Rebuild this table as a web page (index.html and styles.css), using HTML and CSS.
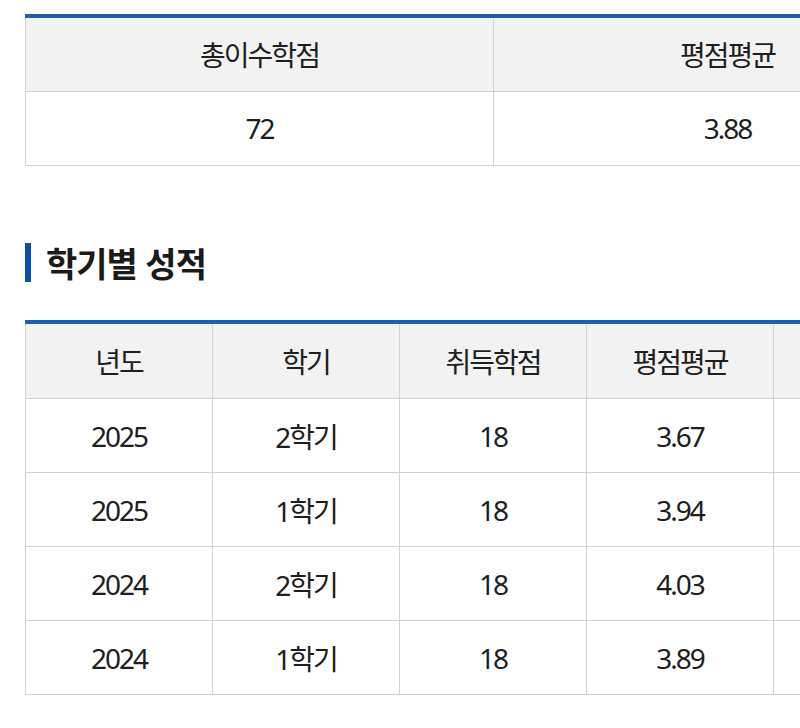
FILE: index.html
```html
<!DOCTYPE html>
<html lang="ko">
<head>
<meta charset="utf-8">
<link rel="stylesheet" href="styles.css">
</head>
<body>
<div class="page">
  <table class="grid summary">
    <colgroup><col class="wide"><col class="wide"></colgroup>
    <thead>
      <tr><th>총이수학점</th><th>평점평균</th></tr>
    </thead>
    <tbody>
      <tr><td>72</td><td>3.88</td></tr>
    </tbody>
  </table>

  <h2 class="section-title">학기별 성적</h2>

  <table class="grid terms">
    <colgroup><col class="narrow"><col class="narrow"><col class="narrow"><col class="narrow"><col class="narrow"></colgroup>
    <thead>
      <tr><th>년도</th><th>학기</th><th>취득학점</th><th>평점평균</th><th></th></tr>
    </thead>
    <tbody>
      <tr><td>2025</td><td>2학기</td><td>18</td><td>3.67</td><td></td></tr>
      <tr><td>2025</td><td>1학기</td><td>18</td><td>3.94</td><td></td></tr>
      <tr><td>2024</td><td>2학기</td><td>18</td><td>4.03</td><td></td></tr>
      <tr><td>2024</td><td>1학기</td><td>18</td><td>3.89</td><td></td></tr>
    </tbody>
  </table>
</div>
</body>
</html>
```
FILE: styles.css
```css
html, body {
  margin: 0;
  padding: 0;
  background: #ffffff;
  overflow: hidden;
}
body {
  font-family: "Noto Sans", "Noto Sans CJK KR", sans-serif;
  color: #1e1e1e;
}
.page {
  padding: 14px 0 0 25px;
  width: 1000px;
}
.grid {
  border-collapse: collapse;
  table-layout: fixed;
  border-top: 4px solid #1b63a9;
  border-left: 1px solid #cfcfcf;
}
.grid th,
.grid td {
  border: 1px solid #d2d2d2;
  border-top: none;
  text-align: center;
  font-size: 28px;
  letter-spacing: -2px;
  font-weight: 400;
  height: 74px;
  padding: 0;
  box-sizing: border-box;
}
.grid th {
  background: #f2f2f2;
  height: 75px;
}
.terms th { height: 77px; }
.summary { width: 936px; }
.summary col.wide { width: 468px; }
.terms { width: 936px; }
.terms col.narrow { width: 187px; }
.section-title {
  margin: 77px 0 38px 0;
  border-left: 6px solid #0d4fa3;
  padding-left: 15px;
  font-family: "Noto Sans CJK KR", sans-serif;
  font-size: 34px;
  font-weight: 700;
  line-height: 39px;
  height: 39px;
  letter-spacing: -1px;
  color: #1a1a1a;
}
```
